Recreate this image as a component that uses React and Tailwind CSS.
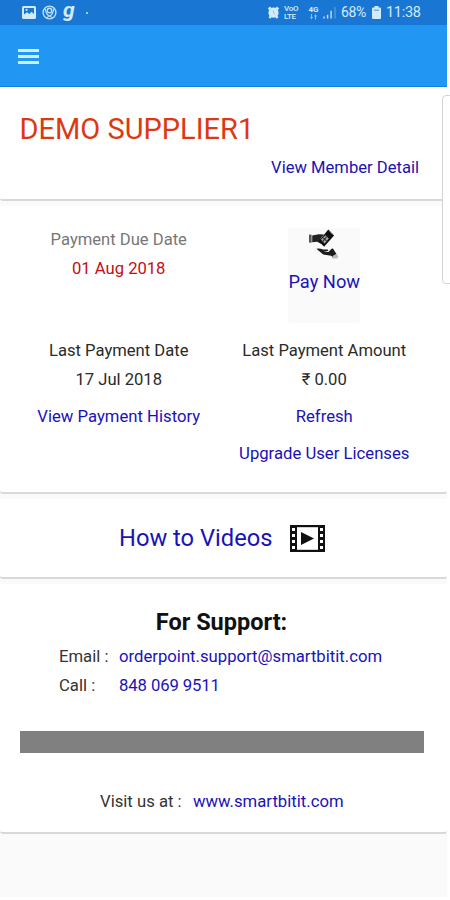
import React from 'react';

const GalleryIcon = () => (
  <svg width="14" height="13" viewBox="0 0 14 13">
    <rect x="0" y="0" width="14" height="13" rx="1.5" fill="#d3ebff" />
    <path d="M2 2h10v6L9.5 5.8 7.5 8 5 6.2 2 8.6z" fill="#1976d2" />
    <circle cx="4.6" cy="3.8" r="1.1" fill="#d3ebff" />
  </svg>
);

const AccountIcon = () => (
  <svg width="15" height="15" viewBox="0 0 15 15" fill="none" stroke="#bfe0fb">
    <circle cx="7.5" cy="7.5" r="6.4" strokeWidth="1.4" />
    <circle cx="7.5" cy="5.6" r="2.3" strokeWidth="1.4" />
    <path d="M3.2 3.6C3.6 8 5.2 10 7.5 11.4 9.8 10 11.4 8 11.8 3.6M5 12.6l2.5-2 2.5 2" strokeWidth="1.1" />
  </svg>
);

const AlarmIcon = () => (
  <svg width="13" height="13" viewBox="0 0 13 13">
    <path d="M1.6 3.4L3.8 1.4M11.4 3.4L9.2 1.4M2.4 12l1.4-1.6M10.6 12L9.2 10.4" stroke="#d3ebff" strokeWidth="2.4" />
    <circle cx="6.5" cy="6.7" r="5.1" fill="#d3ebff" />
    <path d="M6.5 4.2v2.8l1.6 1" stroke="#8fc2ef" strokeWidth=".9" fill="none" />
  </svg>
);

const DataArrowsIcon = () => (
  <svg width="9" height="6" viewBox="0 0 9 6" fill="#8fc2ef">
    <path d="M2 0h1v3h1L2.5 5.5 1 3h1zM6.5 0L8 2.5H7v3H6v-3H5z" />
  </svg>
);

const SignalIcon = () => (
  <svg width="13" height="13" viewBox="0 0 13 13">
    <path d="M1 12.5v-2M4.6 12.5V8.7M8.1 12.5V4.8" stroke="#b9dcf8" strokeWidth="1.5" />
    <path d="M12 12.5V1" stroke="#5b9fdd" strokeWidth="1.2" />
  </svg>
);

const BatteryIcon = () => (
  <svg width="9" height="13" viewBox="0 0 9 13">
    <path d="M2.5 0h4v1.5H8q1 0 1 1V12q0 1-1 1H1q-1 0-1-1V2.5q0-1 1-1h1.5z" fill="#d3ebff" />
    <path d="M2 4.2h5" stroke="#5b9fdd" strokeWidth="1.2" />
  </svg>
);

const PayIcon = () => (
  <svg width="32" height="31" viewBox="0 0 32 31">
    <path d="M1 6.5l2.6.3v8L1 14.6z" fill="#555" />
    <path d="M4.2 7.6l6.5-1.4 5.2.3-3.4 4.3 2.8 3.4-2.4 1.6-3.7-2-5 .4z" fill="#222" />
    <path d="M20.3 1.4l5.8 6-10 11.4-5.4-5.5z" fill="#111" />
    <path d="M13 11.4l4.6-4.2 3.2 3.2-4.2 5z" fill="#aaa" />
    <path d="M15 10l3.6 2.8M18.7 8.6l-4 5" stroke="#333" strokeWidth="1.2" />
    <path d="M21.3 3.3l3.4 3.4" stroke="#666" strokeWidth=".8" />
    <path d="M8.5 20.7q3.5-.5 6.5.9l4.5-.2q1.4.6.2 1.7l-4.3.6 5 .2 3.2-3.2q1.4-.6 1.9.5l3.2 5.2-2.7 3.6-2.9-2.3-7.9-1.2-5.1-4.3z" fill="#1c1c1c" />
    <path d="M25.3 27.6l3.3-1.8 1.7 2.8-1 1.9h-5.6z" fill="#bbb" />
  </svg>
);

const FilmIcon = () => (
  <svg width="35" height="27" viewBox="0 0 35 27">
    <rect width="35" height="27" fill="#111" />
    <rect x="7" y="2.2" width="21" height="22.6" fill="#fff" />
    <path d="M11 7l13 6.5L11 20z" fill="#111" />
    <path
      d="M2 3h3v3H2zM2 9h3v3H2zM2 15h3v3H2zM2 21h3v3H2zM30 3h3v3h-3zM30 9h3v3h-3zM30 15h3v3h-3zM30 21h3v3h-3z"
      fill="#fff"
    />
  </svg>
);

const Card = ({ className, children }) => (
  <div className={`bg-white rounded-b-[3px] border-b-2 border-[#d8d8d8] ${className}`}>{children}</div>
);

const App = () => {
  const renderStatusBar = () => (
    <div className="flex h-[25px] items-center bg-[#1976d2] pl-[22px] text-[#d3ebff]">
      <GalleryIcon />
      <div className="ml-[6px]"><AccountIcon /></div>
      <span className="-mt-[5px] ml-[6px] w-[12px] text-[21px] leading-[25px] font-bold italic">g</span>
      <span className="ml-[11px] size-[2px] rounded-full bg-[#d3ebff]" />
      <div className="ml-[179px]"><AlarmIcon /></div>
      <div className="ml-[4px] w-[15px] text-[8px] leading-[8px] font-medium tracking-[-0.3px]">
        <div>VoO</div>
        <div>LTE</div>
      </div>
      <div className="ml-[9px] flex w-[11px] flex-col items-center text-[8px] leading-[8px] font-bold">
        <div>4G</div>
        <DataArrowsIcon />
      </div>
      <div className="ml-[4px]"><SignalIcon /></div>
      <span className="ml-[5px] w-[25px] text-[14px] whitespace-nowrap tracking-[-0.4px]">68%</span>
      <div className="ml-[6px]"><BatteryIcon /></div>
      <span className="ml-[5px] text-[14.5px] whitespace-nowrap tracking-[-0.3px]">11:38</span>
    </div>
  );

  const renderHeader = () => (
    <div className="h-[62px] border-b border-[#1680d8] bg-[#2196f3] pt-[24px] pl-[18px]">
      <div className="flex w-[21px] flex-col gap-[3px]">
        <div className="h-[3px] bg-[#c9f1ff]" />
        <div className="h-[3px] bg-[#c9f1ff]" />
        <div className="h-[3px] bg-[#c9f1ff]" />
      </div>
    </div>
  );

  const renderMember = () => (
    <Card className="h-[114px] pt-[24px]">
      <h1 className="pl-[19.5px] text-[29px] leading-[36px] text-[#dc3912]">DEMO SUPPLIER1</h1>
      <div className="mt-[11px] pr-[28px] text-right text-[16.6px] leading-[20px] text-[#1c12b0]">View Member Detail</div>
    </Card>
  );

  const renderPayment = () => (
    <Card className="mt-[5px] h-[288px] pl-4">
      <div className="grid h-[119px] w-[411px] grid-cols-2 text-center text-[16.6px] leading-[29px]">
        <div className="pt-[19px]">
          <div className="text-[#777]">Payment Due Date</div>
          <div className="text-[#c40d12]">01 Aug 2018</div>
        </div>
        <div className="mx-auto mt-[22px] flex h-[95px] w-[72px] flex-col items-center rounded-[3px] bg-[#fafafa]">
          <PayIcon />
          <div className="mt-[8px] text-[18.3px] whitespace-nowrap text-[#1a12b8]">Pay Now</div>
        </div>
      </div>
      <div className="grid w-[411px] grid-cols-2 pt-[11px] text-center text-[16.6px] leading-[29px] text-[#2a2a2a]">
        <div>Last Payment Date</div>
        <div>Last Payment Amount</div>
        <div>17 Jul 2018</div>
        <div>₹ 0.00</div>
      </div>
      <div className="mt-[4px] grid w-[411px] grid-cols-2 text-center text-[16.7px] leading-[37px] text-[#1a12b8]">
        <div>View Payment History</div>
        <div>Refresh</div>
        <div className="col-start-2">Upgrade User Licenses</div>
      </div>
    </Card>
  );

  const renderVideos = () => (
    <Card className="mt-[5px] flex h-[80px] items-center pl-[119px]">
      <span className="w-[171px] pt-[2px] text-[23.7px] text-[#1a12b8]">How to Videos</span>
      <FilmIcon />
    </Card>
  );

  const renderSupport = () => (
    <Card className="mt-[5px] h-[250px] pt-[22px]">
      <h2 className="pr-[4px] text-center text-[23.5px] leading-[32px] font-bold text-[#111]">For Support:</h2>
      <div className="mt-[4px] grid grid-cols-[60px_1fr] pl-[59px] text-[16.7px] leading-[29px] text-[#333]">
        <span>Email :</span>
        <span className="text-[#1a12b8]">orderpoint.support@smartbitit.com</span>
        <span>Call :</span>
        <span className="text-[#1a12b8] tracking-[-0.1px]">848 069 9511</span>
      </div>
      <div className="mt-[31px] ml-[20px] h-[22px] w-[404px] bg-[#808080]" />
      <div className="mt-[34px] flex pl-[100px] text-[16.7px] leading-[29px] text-[#333]">
        <span className="w-[93px]">Visit us at :</span>
        <span className="text-[#1a12b8]">www.smartbitit.com</span>
      </div>
    </Card>
  );

  return (
    <div className="relative h-[900px] overflow-hidden bg-white font-['Roboto',sans-serif]">
      <div className="h-[897px] w-[447px] bg-[#fafafa]">
        {renderStatusBar()}
        {renderHeader()}
        {renderMember()}
        {renderPayment()}
        {renderVideos()}
        {renderSupport()}
      </div>
      {/* edge panel handle */}
      <div className="absolute top-[95px] left-[442px] h-[189px] w-[12px] rounded-l-[4px] border border-[#d4d4d4] bg-white" />
    </div>
  );
};

export default App;
